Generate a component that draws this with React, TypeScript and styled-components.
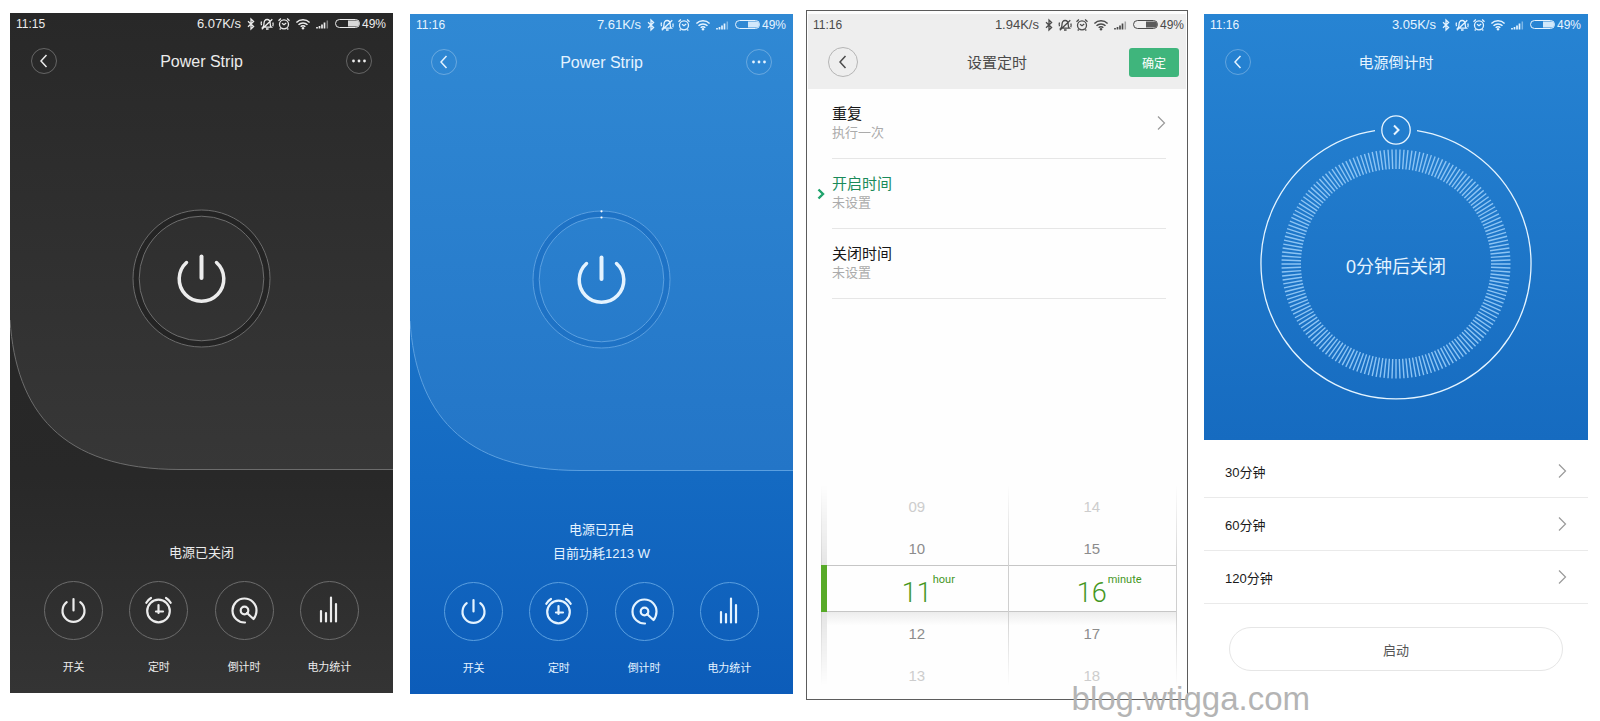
import React from "react";
import styled, { createGlobalStyle, css } from "styled-components";

const sans = `"Liberation Sans", "Noto Sans CJK SC", sans-serif`;

const GlobalStyle = createGlobalStyle`
  *, *::before, *::after { box-sizing: border-box; }
  body { margin: 0; background: #fff; font-family: ${sans}; }
  button { margin: 0; padding: 0; border: 0; background: none; color: inherit; font: inherit; cursor: pointer; }
  h2, p, ul, ol { margin: 0; padding: 0; font: inherit; list-style: none; }
  svg { display: block; flex: none; }
`;

/* ---------- page ---------- */

const Page = styled.main`
  position: relative;
  display: grid;
  grid-template-columns: 383fr 17px 383fr 13px 382fr 16px 384fr;
  align-items: start;
  padding: 10px 12px 20px 10px;
`;

const Screen = styled.section<{ $column: number; $drop?: number }>`
  grid-column: ${(p) => p.$column};
  min-width: 0;
  display: flex;
  flex-direction: column;
  margin-top: ${(p) => p.$drop ?? 0}px;
`;

const Watermark = styled.p`
  position: absolute;
  right: 290px;
  bottom: 3px;
  font-size: 33px;
  line-height: 36px;
  color: #b4b4b4;
`;

/* ---------- status bar ---------- */

const StatusBar = styled.div<{ $tight?: boolean }>`
  display: flex;
  align-items: center;
  height: 21px;
  padding: 0 ${(p) => (p.$tight ? 2 : 7)}px 0 ${(p) => (p.$tight ? 5 : 6)}px;
  font-size: 12px;
`;

const Rate = styled.span`
  margin-left: auto;
  margin-right: 6px;
  font-size: 13px;
`;

const StatusIcons = styled.svg`
  margin-right: 1px;
`;

function Status({ time, rate, tight }: { time: string; rate: string; tight?: boolean }) {
  return (
    <StatusBar $tight={tight}>
      <span>{time}</span>
      <Rate>{rate}</Rate>
      <StatusIcons width="114" height="14" viewBox="0 0 114 14" fill="none" stroke="currentColor" strokeWidth="1.300" aria-hidden="true">
        <path d="M1 4.2 6.6 9.4 4 12V2l2.600 2.600L1 9.800" />
        <path d="M15.800 10.200c1-.9 1.200-2 1.200-3.700 0-2.400 1.100-4 3.100-4s3.100 1.600 3.100 4c0 1.700.2 2.800 1.200 3.700zM19 12h2.600M14.800 12.300 25.300 2.200M14.500 4.500c-.5 1.200-.5 2.600 0 3.800M25.800 5.500c.5 1.200.5 2.600 0 3.800" />
        <circle cx="37" cy="7.300" r="4.500" />
        <path d="M35 6.300l2 1.500 2.200-1.700M31.500 3.800l2.400-2.200M42.500 3.800l-2.400-2.200M33.700 11.500l-1 1M40.300 11.500l1 1" />
        <path d="M49.400 5.500c3.700-3.600 9.500-3.600 13.200 0M51.500 7.700c2.500-2.400 6.500-2.400 9 0M53.700 9.800c1.300-1.300 3.300-1.300 4.600 0" strokeWidth="1.500" />
        <circle cx="56" cy="11.300" r="1.200" fill="currentColor" stroke="none" />
        <path d="M70 11.500v-1.500M72.500 11.500v-2.500M75 11.500V7.500M77.500 11.500V5.500" strokeWidth="1.700" />
        <path d="M80.300 11.500V3.500" strokeWidth="1.500" opacity=".45" />
        <rect x="88.500" y="2.500" width="24" height="8" rx="4" strokeWidth="1" />
        <path d="M101 3.500h8a3 3 0 0 1 0 6h-8z" fill="currentColor" stroke="none" opacity=".9" />
      </StatusIcons>
      <span>49%</span>
    </StatusBar>
  );
}

/* ---------- title bar ---------- */

const TitleBar = styled.header<{ $wide?: boolean }>`
  display: grid;
  grid-template-columns: 1fr auto 1fr;
  align-items: center;
  height: 54px;
  padding: 0 ${(p) => (p.$wide ? 7 : 21)}px;
`;

const Title = styled.h2<{ $cjk?: boolean }>`
  padding-top: 2px;
  font-size: ${(p) => (p.$cjk ? 15 : 16)}px;
  line-height: 24px;
`;

const RoundButton = styled.button<{ $large?: boolean; $end?: boolean }>`
  display: grid;
  place-items: center;
  justify-self: ${(p) => (p.$end ? "end" : "start")};
  margin-left: ${(p) => (p.$large ? 13 : 0)}px;
  width: ${(p) => (p.$large ? 30 : 26)}px;
  height: ${(p) => (p.$large ? 30 : 26)}px;
  border: 1px solid ${(p) => (p.$large ? "#b5b5b5" : "rgba(255, 255, 255, 0.28)")};
  border-radius: 50%;
`;

const ConfirmButton = styled.button`
  justify-self: end;
  width: 50px;
  height: 29px;
  border-radius: 3px;
  background: #3fb57c;
  color: #fff;
  font-size: 12px;
`;

const BackIcon = () => (
  <svg width="8" height="14" viewBox="0 0 8 14" fill="none" stroke="currentColor" strokeWidth="1.500">
    <path d="M6.500 1 1 7l5.500 6" />
  </svg>
);

const MoreIcon = () => (
  <svg width="16" height="4" viewBox="0 0 16 4" fill="currentColor">
    <circle cx="2.500" cy="2" r="1.400" />
    <circle cx="8" cy="2" r="1.400" />
    <circle cx="13.500" cy="2" r="1.400" />
  </svg>
);

/* ---------- power screens ---------- */

const themes = {
  off: {
    base: "linear-gradient(#262626 40%, #282828 68%, #343434)",
    from: "#282828",
    to: "#373737",
    line: "#6c6c6c",
    ring: "#242424",
    ink: "#ececec",
  },
  on: {
    base: "linear-gradient(#1c75c9 40%, #146ac2 68%, #0c5cb9)",
    from: "#3089d4",
    to: "#2375c7",
    line: "#5a9fe0",
    ring: "#1e72c5",
    ink: "#e4f3ff",
  },
};
type Mode = keyof typeof themes;

const PowerScreen = styled(Screen)<{ $mode: Mode }>`
  background: ${(p) => themes[p.$mode].base};
  color: ${(p) => themes[p.$mode].ink};
`;

const Upper = styled.div`
  display: grid;
  > * { grid-area: 1 / 1; min-width: 0; }
`;

const Swoosh = styled.svg`
  width: 100%;
  height: 100%;
`;

const UpperContent = styled.div`
  display: flex;
  flex-direction: column;
`;

const Hero = styled.div`
  display: grid;
  place-items: center;
  padding: 121px 0 122px;
`;

const Notice = styled.div`
  display: flex;
  flex-direction: column;
  justify-content: flex-end;
  min-height: 95px;
  font-size: 13px;
  line-height: 24px;
  text-align: center;
`;

const Actions = styled.nav`
  display: grid;
  grid-template-columns: repeat(4, 1fr);
  padding: 16px 21px 17px;
`;

const Action = styled.button`
  display: flex;
  flex-direction: column;
  align-items: center;
  gap: 18px;
  font-size: 11px;
  line-height: 18px;
`;

const Disc = styled.span<{ $mode: Mode }>`
  display: grid;
  place-items: center;
  width: 59px;
  height: 59px;
  border: 1px solid ${(p) => themes[p.$mode].line};
  border-radius: 50%;
`;

const icons: Record<string, React.ReactNode> = {
  开关: (
    <path d="M9.700 8.200a11 11 0 1 0 13.600 0M16.500 5v11.500" />
  ),
  定时: (
    <>
      <circle cx="16.500" cy="17" r="11.300" />
      <path d="M16.500 11v6.500H21M14 17.500h2.500V19M4.300 8.800c1-1.900 2.400-3.500 4.700-4.800M28.700 8.800c-1-1.900-2.400-3.500-4.700-4.800" />
    </>
  ),
  倒计时: (
    <>
      <path d="M17 28.500A12 12 0 1 1 28.500 16.500c0 3.300-1 6-3 8.500l-6.500-6" />
      <circle cx="16.500" cy="16.500" r="3.800" />
    </>
  ),
  电力统计: (
    <path d="M8 17v10.500M13 19v8.500M18 3.500v24M23 10v17.500" />
  ),
};

function Power({ mode, time, rate, lines, column, drop }: {
  mode: Mode; time: string; rate: string; lines: string[]; column: number; drop: number;
}) {
  const t = themes[mode];
  return (
    <PowerScreen $mode={mode} $column={column} $drop={drop}>
      <Upper>
        <Swoosh viewBox="0 0 383 457" preserveAspectRatio="none" aria-hidden="true">
          <defs>
            <linearGradient id={`fill-${mode}`} x1="0" x2="0" y1="0" y2="1">
              <stop offset="0" stopColor={t.from} />
              <stop offset="1" stopColor={t.to} />
            </linearGradient>
          </defs>
          <path d="M0 0H383V456.500H170C50 456.500 6 397 0 307z" fill={`url(#fill-${mode})`} />
          <path d="M383 456.500H170C50 456.500 6 397 0 307" fill="none" stroke={t.line} vectorEffect="non-scaling-stroke" />
        </Swoosh>
        <UpperContent>
          <Status time={time} rate={rate} />
          <TitleBar>
            <RoundButton aria-label="Back"><BackIcon /></RoundButton>
            <Title>Power Strip</Title>
            <RoundButton $end aria-label="More"><MoreIcon /></RoundButton>
          </TitleBar>
          <Hero>
            <button aria-label="Power">
              <svg width="139" height="139" viewBox="0 0 139 139" fill="none">
                <circle cx="69.500" cy="69.500" r="65.500" stroke={t.ring} strokeWidth="6" />
                <circle cx="69.500" cy="69.500" r="68.500" stroke={t.line} />
                <circle cx="69.500" cy="69.500" r="62.300" stroke={t.line} />
                {mode === "on" && (
                  <g fill="#fff">
                    <circle cx="69.500" cy="1.300" r="1.100" />
                    <circle cx="69.500" cy="7.500" r="1.100" />
                  </g>
                )}
                <path d="M54.500 53.500a22.300 22.300 0 1 0 30 0" stroke={t.ink} strokeWidth="3.500" strokeLinecap="round" />
                <path d="M69.500 47.500v21.500" stroke={t.ink} strokeWidth="4" strokeLinecap="round" />
              </svg>
            </button>
          </Hero>
        </UpperContent>
      </Upper>
      <Notice>
        {lines.map((l) => <p key={l}>{l}</p>)}
      </Notice>
      <Actions>
        {Object.entries(icons).map(([name, art]) => (
          <Action key={name}>
            <Disc $mode={mode}>
              <svg width="33" height="33" viewBox="0 0 33 33" fill="none" stroke="currentColor" strokeWidth="2.200" strokeLinecap="round" strokeLinejoin="round">
                {art}
              </svg>
            </Disc>
            {name}
          </Action>
        ))}
      </Actions>
    </PowerScreen>
  );
}

/* ---------- timer screen ---------- */

const TimerScreen = styled(Screen)`
  padding: 3px 1px 0;
  border: 1px solid #5c5c5c;
  background: #fefefe;
`;

const GreyHead = styled.div`
  background: #eee;
  color: #4a4a4a;
`;

const Settings = styled.ul`
  margin: 0 20px 0 24px;
`;

const Setting = styled.li`
  position: relative;
  border-bottom: 1px solid #e6e6e6;
`;

const SettingButton = styled.button<{ $active?: boolean }>`
  display: flex;
  align-items: center;
  justify-content: space-between;
  width: 100%;
  height: 69px;
  padding-bottom: 2px;
  text-align: left;
  color: ${(p) => (p.$active ? "#1a8a5a" : "#161616")};
  font-size: 15px;
  line-height: 20px;
`;

const Hint = styled.span`
  display: block;
  color: #ababab;
  font-size: 13px;
  line-height: 18px;
`;

const Pointer = styled.svg`
  position: absolute;
  left: -15px;
  top: 29px;
`;

const Chevron = () => (
  <svg width="9" height="14" viewBox="0 0 9 14" fill="none" stroke="#9a9a9a" strokeWidth="1.200">
    <path d="M1 .5 7.500 7 1 13.500" />
  </svg>
);

const Picker = styled.div`
  position: relative;
  display: grid;
  grid-template-columns: 6px 181fr 168fr;
  margin: 186px 9px 3px 13px;
`;

const fade = css`
  -webkit-mask-image: linear-gradient(transparent, #000 40%, #000 60%, transparent 95%);
  mask-image: linear-gradient(transparent, #000 40%, #000 60%, transparent 95%);
`;

const Rail = styled.span`
  background: #e4e4e4;
  border-left: 1px solid #cfcfcf;
  ${fade}
`;

const Wheel = styled.ol`
  position: relative;
  display: flex;
  flex-direction: column;
  &::after {
    content: "";
    position: absolute;
    inset: 0 0 0 auto;
    width: 1px;
    background: #cfcfcf;
    ${fade}
  }
`;

const Tick = styled.li<{ $far?: boolean }>`
  display: grid;
  place-items: center;
  height: 42px;
  padding-right: 2px;
  font-size: 15px;
  color: ${(p) => (p.$far ? "#cdcdcd" : "#8c8c8c")};
`;

const Selected = styled.li`
  display: grid;
  grid-template-columns: 1fr auto 1fr;
  align-items: center;
  height: 47px;
  margin-top: -4px;
  padding-right: 2px;
  border: solid #c6c6c6;
  border-width: 1px 0;
  color: #45971f;
  font: 300 27px/32px Roboto, sans-serif;
  > span { grid-column: 2; padding-top: 8px; }
  > small {
    align-self: start;
    padding: 5px 0 0 1px;
    font: 400 11px/18px Roboto, sans-serif;
  }
  & + li { background: linear-gradient(#ececec, transparent 32%); }
`;

const Marker = styled.span`
  position: absolute;
  left: 0;
  top: 80px;
  width: 6px;
  height: 47px;
  background: #57aa28;
`;

function Column({ values, unit }: { values: string[]; unit: string }) {
  return (
    <Wheel role="listbox" aria-label={unit}>
      {values.map((v, i) =>
        i === 2 ? (
          <Selected key={v} role="option" aria-selected>
            <span>{v}</span>
            <small>{unit}</small>
          </Selected>
        ) : (
          <Tick key={v} role="option" aria-selected={false} $far={i === 0 || i === 4}>{v}</Tick>
        )
      )}
    </Wheel>
  );
}

const settings = [
  { name: "重复", hint: "执行一次", more: true },
  { name: "开启时间", hint: "未设置", active: true },
  { name: "关闭时间", hint: "未设置" },
];

function Timer() {
  return (
    <TimerScreen $column={5}>
      <GreyHead>
        <Status time="11:16" rate="1.94K/s" tight />
        <TitleBar $wide>
          <RoundButton $large aria-label="Back"><BackIcon /></RoundButton>
          <Title $cjk>设置定时</Title>
          <ConfirmButton>确定</ConfirmButton>
        </TitleBar>
      </GreyHead>
      <Settings>
        {settings.map((s) => (
          <Setting key={s.name}>
            {s.active && (
              <Pointer width="8" height="12" viewBox="0 0 8 12" fill="none" stroke="#1fa36c" strokeWidth="2.400">
                <path d="M1.500 1.500 6 6l-4.500 4.500" />
              </Pointer>
            )}
            <SettingButton $active={s.active}>
              <span>
                {s.name}
                <Hint>{s.hint}</Hint>
              </span>
              {s.more && <Chevron />}
            </SettingButton>
          </Setting>
        ))}
      </Settings>
      <Picker>
        <Rail />
        <Column values={["09", "10", "11", "12", "13"]} unit="hour" />
        <Column values={["14", "15", "16", "17", "18"]} unit="minute" />
        <Marker />
      </Picker>
    </TimerScreen>
  );
}

/* ---------- countdown screen ---------- */

const BlueHead = styled.div`
  background: linear-gradient(#2784d3, #166bc0);
  color: #e6f4ff;
`;

const Dial = styled.div`
  display: grid;
  place-items: center;
  padding: 25px 0 39px;
  > * { grid-area: 1 / 1; }
`;

const DialText = styled.p`
  padding-top: 18px;
  font-size: 18px;
  line-height: 24px;
`;

const Presets = styled.ul`
  padding-top: 5px;
`;

const Preset = styled.button`
  display: flex;
  align-items: center;
  justify-content: space-between;
  width: 100%;
  height: 53px;
  padding: 0 21px;
  border-bottom: 1px solid #eaeaea;
  color: #1a1a1a;
  font-size: 13px;
`;

const StartButton = styled.button`
  margin: 23px 25px 0;
  height: 44px;
  border: 1px solid #e6e6e6;
  border-radius: 22px;
  color: #555;
  font-size: 13px;
`;

const ticks = Array.from({ length: 180 }, (_, i) => {
  const a = (i * Math.PI) / 90;
  const s = Math.sin(a);
  const c = Math.cos(a);
  return `M${(136 + 95 * s).toFixed(2)} ${(150 - 95 * c).toFixed(2)}L${(136 + 114.5 * s).toFixed(2)} ${(150 - 114.5 * c).toFixed(2)}`;
}).join("");

function Countdown() {
  return (
    <Screen $column={7} $drop={4}>
      <BlueHead>
        <Status time="11:16" rate="3.05K/s" />
        <TitleBar>
          <RoundButton aria-label="Back"><BackIcon /></RoundButton>
          <Title $cjk>电源倒计时</Title>
        </TitleBar>
        <Dial>
          <svg width="272" height="287" viewBox="0 0 272 287" fill="none">
            <path d={ticks} stroke="#8cc4f4" strokeWidth="1.400" />
            <path d="M157 16.600A135 135 0 1 1 115 16.600" stroke="#e4f4ff" strokeWidth="1.300" />
            <circle cx="136" cy="16" r="14.200" stroke="#e6f4ff" strokeWidth="1.300" />
            <path d="M134 11.500l4.500 4.500-4.500 4.500" stroke="#e6f4ff" strokeWidth="2" />
          </svg>
          <DialText>0分钟后关闭</DialText>
        </Dial>
      </BlueHead>
      <Presets>
        {["30分钟", "60分钟", "120分钟"].map((p) => (
          <li key={p}>
            <Preset>{p}<Chevron /></Preset>
          </li>
        ))}
      </Presets>
      <StartButton>启动</StartButton>
    </Screen>
  );
}

export default function App() {
  return (
    <>
      <GlobalStyle />
      <Page>
        <Power mode="off" time="11:15" rate="6.07K/s" lines={["电源已关闭"]} column={1} drop={3} />
        <Power mode="on" time="11:16" rate="7.61K/s" lines={["电源已开启", "目前功耗1213 W"]} column={3} drop={4} />
        <Timer />
        <Countdown />
        <Watermark>blog.wtigga.com</Watermark>
      </Page>
    </>
  );
}
